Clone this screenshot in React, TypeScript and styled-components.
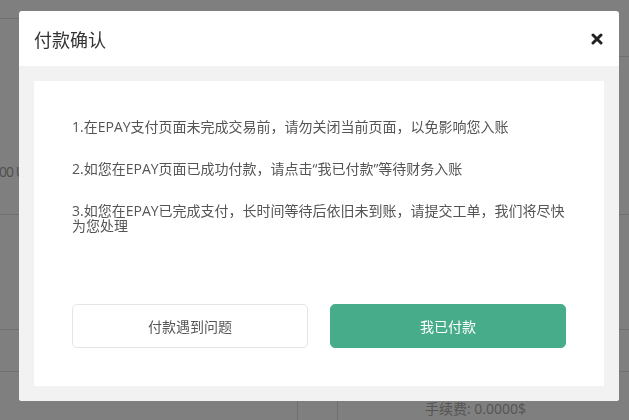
import React from "react";
import styled, { createGlobalStyle } from "styled-components";

const GlobalStyle = createGlobalStyle`
  html, body {
    margin: 0;
    padding: 0;
    background: #ffffff;
    font-family: "Open Sans", "Noto Sans CJK SC", sans-serif;
  }
`;

// page behind the dialog, mostly hidden by the overlay
const Page = styled.div`
  width: 629px;
  height: 420px;
  overflow: hidden;
  color: #aaaaaa;
  font-size: 14px;
`;

const TopRow = styled.div`
  display: flex;
  height: 57px;
`;

const TopCell = styled.div<{ $h: number }>`
  flex: 1;
  height: ${(p) => p.$h}px;
  border-bottom: 1px solid #dedede;
  box-sizing: border-box;
`;

const AmountRow = styled.div`
  height: 158px;
  border-bottom: 1px solid #dedede;
  box-sizing: border-box;
  padding-top: 105px;
  font-size: 14px;
  line-height: 20px;
  color: #a0a0a0;
  white-space: nowrap;
`;

const Amount = styled.span`
  display: inline-block;
  margin-left: -8px;
  letter-spacing: -1px;
`;

const Band = styled.div<{ $h: number }>`
  height: ${(p) => p.$h}px;
  border-bottom: 1px solid #dedede;
  box-sizing: border-box;
`;

const FeeRow = styled.div`
  display: grid;
  grid-template-columns: 298px 40px 1fr;
  height: 48px;
`;

const FeeCell = styled.div<{ $line?: boolean; $text?: boolean }>`
  border-right: ${(p) => (p.$line ? "1px solid #dedede" : "none")};
  display: flex;
  align-items: center;
  padding-left: ${(p) => (p.$text ? "87px" : "0")};
  padding-top: 24px;
  box-sizing: border-box;
  white-space: nowrap;
`;

const Overlay = styled.div`
  position: fixed;
  inset: 0;
  background: rgba(0, 0, 0, 0.5);
  display: flex;
  align-items: flex-start;
  padding: 11px 0 0 19px;
`;

const Modal = styled.div`
  width: 600px;
  background: #ffffff;
  border-radius: 3px;
  overflow: hidden;
`;

const Header = styled.div`
  height: 55px;
  display: flex;
  align-items: center;
  justify-content: space-between;
  padding: 0 16px 0 15px;
`;

const Title = styled.h4`
  margin: 0;
  font-size: 18px;
  font-weight: 400;
  color: #333333;
`;

const CloseButton = styled.button`
  border: 0;
  background: none;
  padding: 0;
  width: 12px;
  height: 12px;
  display: flex;
  cursor: pointer;
`;

const Body = styled.div`
  background: #f2f2f2;
  padding: 15px;
`;

const Panel = styled.div`
  background: #ffffff;
  height: 305px;
  box-sizing: border-box;
  padding: 38px;
  display: flex;
  flex-direction: column;
  justify-content: space-between;
`;

const Notes = styled.div`
  display: flex;
  flex-direction: column;
  gap: 27px;
`;

const Note = styled.p`
  margin: 0;
  font-size: 14px;
  line-height: 15px;
  color: #555555;
`;

const Actions = styled.div`
  display: grid;
  grid-template-columns: 1fr 1fr;
  gap: 22px;
`;

const ActionButton = styled.button<{ $primary?: boolean }>`
  height: 44px;
  border-radius: 5px;
  font-family: inherit;
  font-size: 14px;
  cursor: pointer;
  border: 1px solid ${(p) => (p.$primary ? "#47ac8a" : "#e5e5e5")};
  background: ${(p) => (p.$primary ? "#47ac8a" : "#ffffff")};
  color: ${(p) => (p.$primary ? "#ffffff" : "#555555")};
`;

const notes = [
  "1.在EPAY支付页面未完成交易前，请勿关闭当前页面，以免影响您入账",
  "2.如您在EPAY页面已成功付款，请点击“我已付款”等待财务入账",
  "3.如您在EPAY已完成支付，长时间等待后依旧未到账，请提交工单，我们将尽快为您处理",
];

const App = () => {
  return (
    <>
      <GlobalStyle />
      <Page>
        <TopRow>
          <TopCell $h={19} />
          <TopCell $h={57} />
        </TopRow>
        <AmountRow>
          <Amount>100 USDT</Amount>
        </AmountRow>
        <Band $h={115} />
        <Band $h={42} />
        <FeeRow>
          <FeeCell $line />
          <FeeCell $line />
          <FeeCell $text>手续费: 0.0000$</FeeCell>
        </FeeRow>
      </Page>
      <Overlay>
        <Modal>
          <Header>
            <Title>付款确认</Title>
            <CloseButton aria-label="close">
              <svg width="12" height="12" viewBox="0 0 12 12">
                <path
                  d="M2 2 L10 10 M10 2 L2 10"
                  stroke="#222"
                  strokeWidth="3"
                  strokeLinecap="round"
                />
              </svg>
            </CloseButton>
          </Header>
          <Body>
            <Panel>
              <Notes>
                {notes.map((n) => (
                  <Note key={n}>{n}</Note>
                ))}
              </Notes>
              <Actions>
                <ActionButton>付款遇到问题</ActionButton>
                <ActionButton $primary>我已付款</ActionButton>
              </Actions>
            </Panel>
          </Body>
        </Modal>
      </Overlay>
    </>
  );
};

export default App;
